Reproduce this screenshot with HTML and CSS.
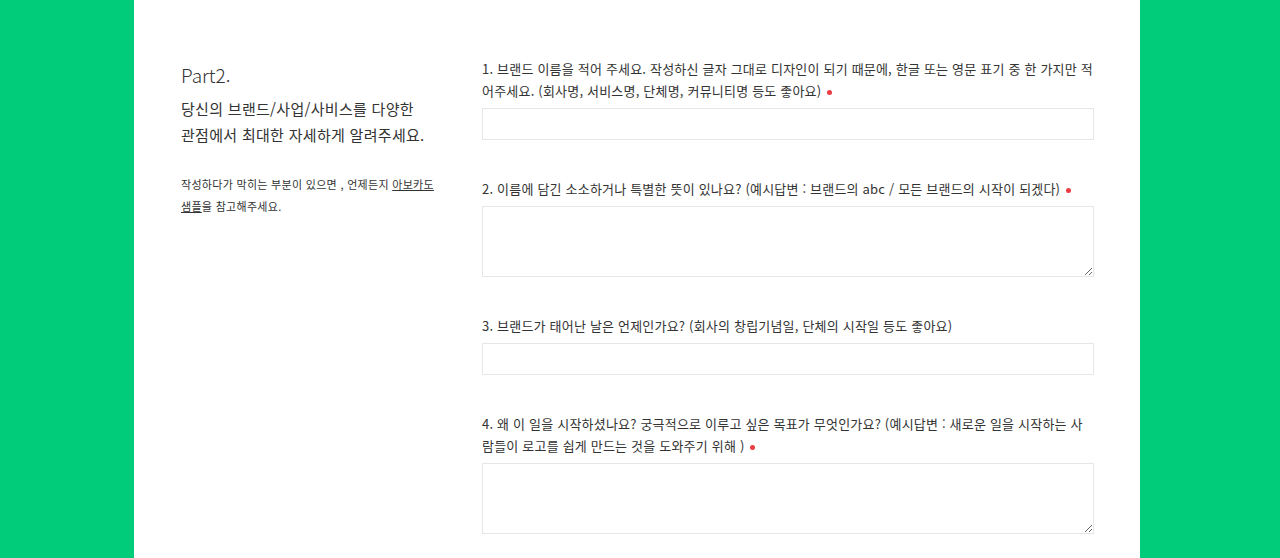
FILE: index.html
```html
<!DOCTYPE html>
<html lang="ko">
<head>
<meta charset="utf-8">
<title>Part2</title>
<link rel="stylesheet" href="styles.css">
</head>
<body>
<main class="panel">
  <aside class="intro">
    <h2 class="part-title">Part2.</h2>
    <p class="part-lead">당신의 브랜드/사업/사비스를 다양한<br>관점에서 최대한 자세하게 알려주세요.</p>
    <p class="part-note">작성하다가 막히는 부분이 있으면 , 언제든지 <a href="#" class="note-link">아보카도 샘플</a>을 참고해주세요.</p>
  </aside>
  <form class="questions">
    <div class="field">
      <label class="q-label">1. 브랜드 이름을 적어 주세요. 작성하신 글자 그대로 디자인이 되기 때문에, 한글 또는 영문 표기 중 한 가지만 적어주세요. (회사명, 서비스명, 단체명, 커뮤니티명 등도 좋아요) <span class="req"></span></label>
      <input class="q-input" type="text">
    </div>
    <div class="field">
      <label class="q-label">2. 이름에 담긴 소소하거나 특별한 뜻이 있나요? (예시답변 : 브랜드의 abc / 모든 브랜드의 시작이 되겠다) <span class="req"></span></label>
      <textarea class="q-area"></textarea>
    </div>
    <div class="field">
      <label class="q-label">3. 브랜드가 태어난 날은 언제인가요? (회사의 창립기념일, 단체의 시작일 등도 좋아요)</label>
      <input class="q-input" type="text">
    </div>
    <div class="field">
      <label class="q-label">4. 왜 이 일을 시작하셨나요? 궁극적으로 이루고 싶은 목표가 무엇인가요? (예시답변 : 새로운 일을 시작하는 사람들이 로고를 쉽게 만드는 것을 도와주기 위해 ) <span class="req"></span></label>
      <textarea class="q-area"></textarea>
    </div>
  </form>
</main>
</body>
</html>
```

FILE: styles.css
```css
html, body {
  margin: 0;
  padding: 0;
}
body {
  background: #00cc7a;
  font-family: "Noto Sans CJK KR", "Noto Sans", sans-serif;
  color: #333333;
  height: 558px;
  overflow: hidden;
}
.panel {
  margin-left: 134px;
  width: 1006px;
  min-height: 558px;
  background: #ffffff;
  display: flex;
  box-sizing: border-box;
  padding: 58px 46px 0 47px;
}
.intro {
  width: 254px;
  margin-right: 47px;
  flex-shrink: 0;
}
.part-title {
  margin: 4px 0 0;
  font-size: 19px;
  font-weight: 300;
  line-height: 26px;
  color: #333;
}
.part-lead {
  margin: 8px 0 0;
  font-size: 15px;
  line-height: 26px;
  letter-spacing: 0.3px;
  color: #333;
}
.part-note {
  margin: 25px 0 0;
  font-size: 11px;
  line-height: 22px;
  letter-spacing: 0.3px;
  color: #333;
}
.note-link {
  color: #333;
  text-decoration: underline;
}
.questions {
  width: 612px;
  display: flex;
  flex-direction: column;
  gap: 38px;
}
.field {
  display: flex;
  flex-direction: column;
}
.q-label {
  font-size: 13px;
  line-height: 22px;
  letter-spacing: 0.2px;
  margin-bottom: 6px;
  color: #333;
}
.req {
  display: inline-block;
  width: 5px;
  height: 5px;
  border-radius: 50%;
  background: #ea3c43;
  vertical-align: middle;
  margin-left: 2px;
}
.q-input, .q-area {
  box-sizing: border-box;
  width: 612px;
  border: 1px solid #e6e6e6;
  background: #fff;
  margin: 0;
  font: inherit;
}
.q-input {
  height: 32px;
}
.q-area {
  height: 71px;
  resize: vertical;
}
```
